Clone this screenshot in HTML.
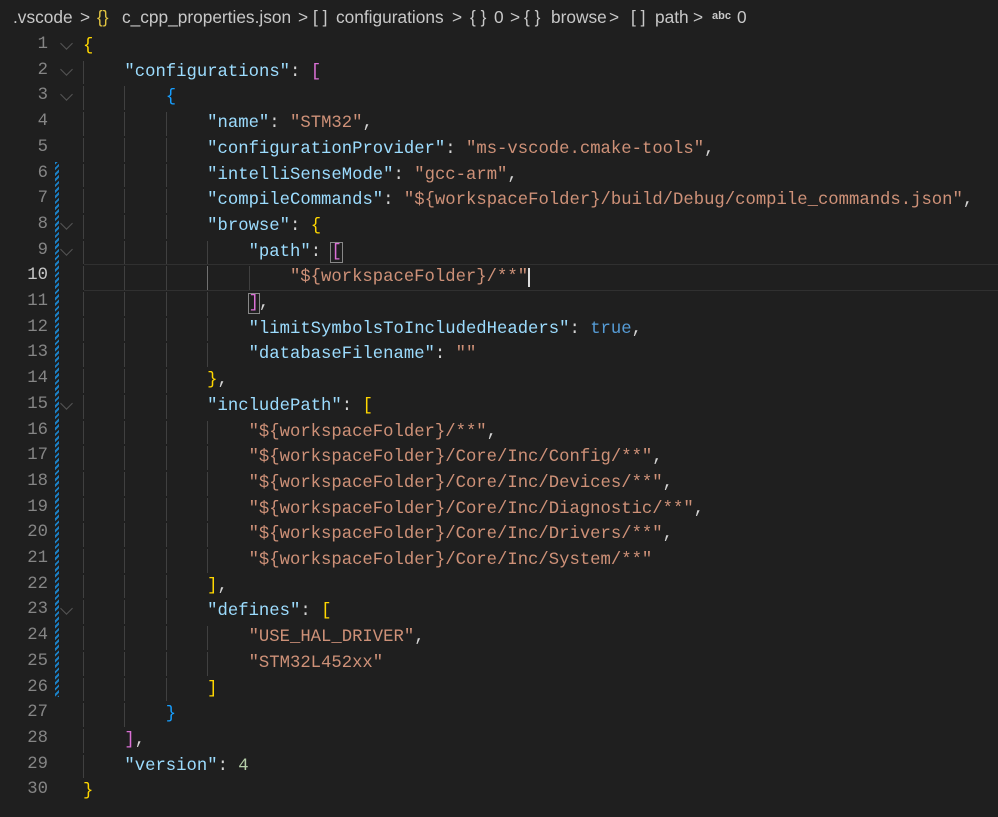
<!DOCTYPE html>
<html><head><meta charset="utf-8"><style>
body{margin:0;width:998px;height:817px;background:#1f1f1f;overflow:hidden;position:relative;font-family:"Liberation Mono",monospace}
#bc{position:absolute;top:0;left:0;width:998px;height:31px;font-family:"Liberation Sans",sans-serif;font-size:17.3px;color:#c8c8c8}
#bc span{position:absolute;top:7px;white-space:nowrap}
.ln{position:absolute;left:0;width:48px;text-align:right;color:#858585;font-size:17.25px}
.code{position:absolute;left:83px;white-space:pre;font-size:17.25px;color:#d4d4d4}
.g{display:inline-block;width:41.4px;box-shadow:inset 1px 0 0 #404040}
.ga{box-shadow:inset 1px 0 0 #707070}
.k{color:#9cdcfe}.s{color:#ce9178}.y{color:#ffd700}.p{color:#da70d6}.b{color:#179fff}.t{color:#569cd6}.n{color:#b5cea8}
.chev{position:absolute;left:62px;width:8px;height:8px;border-right:1.5px solid #555;border-bottom:1.5px solid #555;transform:rotate(45deg)}
</style></head><body>
<div id="bc">
<span style="left:13px">.vscode</span><span style="left:80px">&gt;</span>
<span style="left:97px;color:#e0c341">{}</span><span style="left:122px">c_cpp_properties.json</span><span style="left:298px">&gt;</span>
<span style="left:313px">[ ]</span><span style="left:336px">configurations</span><span style="left:452px">&gt;</span>
<span style="left:470px">{ }</span><span style="left:494px">0</span><span style="left:510px">&gt;</span>
<span style="left:524px">{ }</span><span style="left:551px">browse</span><span style="left:609px">&gt;</span>
<span style="left:631px">[ ]</span><span style="left:655px">path</span><span style="left:693px">&gt;</span>
<span style="left:712px;font-size:11px;top:10px;font-weight:bold">abc</span><span style="left:737px">0</span>
</div>
<div style="position:absolute;left:84px;right:0;top:264px;height:25px;border-top:1px solid #303030;border-bottom:1px solid #303030"></div>
<div style="position:absolute;left:55px;top:162px;width:4px;height:535px;background:repeating-linear-gradient(135deg,#1b81c7 0 2px,#1f1f1f 2px 4px)"></div>
<div id="ed"></div>
<script>
const L=[
[0,'<span class="y">{</span>',1],
[4,'<span class="k">"configurations"</span>: <span class="p">[</span>',1],
[8,'<span class="b">{</span>',1],
[12,'<span class="k">"name"</span>: <span class="s">"STM32"</span>,'],
[12,'<span class="k">"configurationProvider"</span>: <span class="s">"ms-vscode.cmake-tools"</span>,'],
[12,'<span class="k">"intelliSenseMode"</span>: <span class="s">"gcc-arm"</span>,'],
[12,'<span class="k">"compileCommands"</span>: <span class="s">"${workspaceFolder}/build/Debug/compile_commands.json"</span>,'],
[12,'<span class="k">"browse"</span>: <span class="y">{</span>',1],
[16,'<span class="k">"path"</span>: <span class="p" style="outline:1px solid #888">[</span>',1],
[20,'<span class="s">"${workspaceFolder}/**"</span><span style="border-left:2px solid #ddd"></span>'],
[16,'<span class="p" style="outline:1px solid #888">]</span>,'],
[16,'<span class="k">"limitSymbolsToIncludedHeaders"</span>: <span class="t">true</span>,'],
[16,'<span class="k">"databaseFilename"</span>: <span class="s">""</span>'],
[12,'<span class="y">}</span>,'],
[12,'<span class="k">"includePath"</span>: <span class="y">[</span>',1],
[16,'<span class="s">"${workspaceFolder}/**"</span>,'],
[16,'<span class="s">"${workspaceFolder}/Core/Inc/Config/**"</span>,'],
[16,'<span class="s">"${workspaceFolder}/Core/Inc/Devices/**"</span>,'],
[16,'<span class="s">"${workspaceFolder}/Core/Inc/Diagnostic/**"</span>,'],
[16,'<span class="s">"${workspaceFolder}/Core/Inc/Drivers/**"</span>,'],
[16,'<span class="s">"${workspaceFolder}/Core/Inc/System/**"</span>'],
[12,'<span class="y">]</span>,'],
[12,'<span class="k">"defines"</span>: <span class="y">[</span>',1],
[16,'<span class="s">"USE_HAL_DRIVER"</span>,'],
[16,'<span class="s">"STM32L452xx"</span>'],
[12,'<span class="y">]</span>'],
[8,'<span class="b">}</span>'],
[4,'<span class="p">]</span>,'],
[4,'<span class="k">"version"</span>: <span class="n">4</span>'],
[0,'<span class="y">}</span>']];
let h='';const lh=25.7;
L.forEach((l,i)=>{const top=33+i*lh;
h+=`<div class="ln" style="top:${top+2}px;${i==9?'color:#c6c6c6':''}">${i+1}</div>`;
if(l[2])h+=`<div class="chev" style="top:${top+6}px"></div>`;
let g='';for(let c=0;c<l[0];c+=4)g+=`<span class="g${(i==9&&c==12)?' ga':''}"> </span>`;
h+=`<div class="code" style="top:${top+2}px;height:${lh}px;line-height:${lh-2}px">${g}${l[1]}</div>`;});
document.getElementById('ed').innerHTML=h;
</script>
</body></html>
